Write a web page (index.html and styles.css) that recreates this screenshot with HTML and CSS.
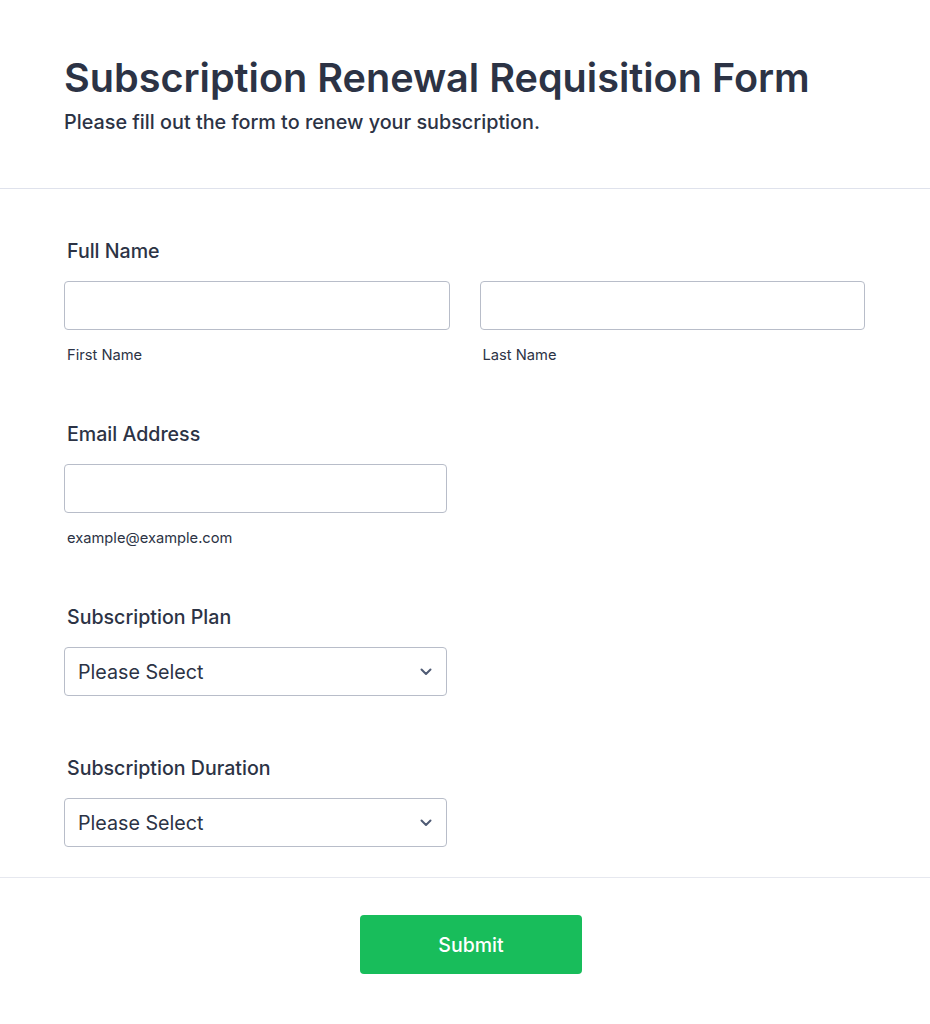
FILE: index.html
```html
<!DOCTYPE html>
<html lang="en">
<head>
  <meta charset="UTF-8">
  <meta name="viewport" content="width=device-width, initial-scale=1.0">
  <title>Subscription Renewal Requisition Form</title>
  <link rel="stylesheet" href="styles.css">
</head>
<body>
  <form class="form">
    <header class="form-header">
      <h1>Subscription Renewal Requisition Form</h1>
      <p>Please fill out the form to renew your subscription.</p>
    </header>

    <section class="form-body">
      <div class="field">
        <label class="field-label">Full Name</label>
        <div class="name-row">
          <div class="name-col">
            <input type="text" class="text-input">
            <span class="sub-label">First Name</span>
          </div>
          <div class="name-col">
            <input type="text" class="text-input">
            <span class="sub-label">Last Name</span>
          </div>
        </div>
      </div>

      <div class="field">
        <label class="field-label">Email Address</label>
        <input type="email" class="text-input narrow">
        <span class="sub-label">example@example.com</span>
      </div>

      <div class="field">
        <label class="field-label">Subscription Plan</label>
        <div class="select narrow">
          <span>Please Select</span>
          <svg width="12" height="8" viewBox="0 0 12 8"><path d="M1.5 1.5 6 6l4.5-4.5" fill="none" stroke="#4f5b74" stroke-width="2" stroke-linecap="round" stroke-linejoin="round"/></svg>
        </div>
      </div>

      <div class="field">
        <label class="field-label">Subscription Duration</label>
        <div class="select narrow">
          <span>Please Select</span>
          <svg width="12" height="8" viewBox="0 0 12 8"><path d="M1.5 1.5 6 6l4.5-4.5" fill="none" stroke="#4f5b74" stroke-width="2" stroke-linecap="round" stroke-linejoin="round"/></svg>
        </div>
      </div>
    </section>

    <footer class="form-footer">
      <button type="button" class="submit-btn">Submit</button>
    </footer>
  </form>
</body>
</html>
```

FILE: styles.css
```css
body {
  font-family: 'Inter', 'Noto Sans', sans-serif;
  background-color: #fff;
  color: #2c3345;
  margin: 0;
  padding: 0;
}
.form-header {
  padding: 54px 64px 54px;
  border-bottom: 1px solid #dfe2ec;
}
.form-header h1 {
  margin: 0;
  font-size: 39.6px;
  font-weight: 600;
  line-height: 48px;
}
.form-header p {
  margin: 8px 0 0;
  font-size: 19.8px;
  font-weight: 500;
  line-height: 24px;
}
.form-body {
  padding: 50px 64px 30px;
  border-bottom: 1px solid #e6e8ef;
}
.field {
  display: flex;
  flex-direction: column;
  align-items: flex-start;
  margin-bottom: 60px;
}
.field:last-child { margin-bottom: 0; }
.field-label {
  margin-left: 3px;
  font-size: 19.6px;
  font-weight: 500;
  line-height: 24px;
  margin-bottom: 18px;
}
.name-row {
  display: flex;
  gap: 30px;
  width: 801px;
}
.name-col {
  flex: 1;
  display: flex;
  flex-direction: column;
}
.text-input {
  box-sizing: border-box;
  width: 100%;
  height: 49px;
  margin: 0;
  border: 1px solid #b8bdc9;
  border-radius: 4px;
  background: #fff;
  font: inherit;
}
.narrow { width: 383px; }
.sub-label {
  margin: 17px 0 -2px 3px;
  font-size: 14.7px;
  line-height: 17px;
}
.select {
  box-sizing: border-box;
  height: 49px;
  display: flex;
  align-items: center;
  justify-content: space-between;
  padding: 0 14px 0 13px;
  border: 1px solid #b8bdc9;
  border-radius: 4px;
  font-size: 19.7px;
}
.form-footer {
  display: flex;
  justify-content: center;
  padding: 37px 0 50px 12px;
}
.submit-btn {
  width: 222px;
  height: 59px;
  border: none;
  border-radius: 4px;
  background: #18bd5b;
  color: #fff;
  font-family: inherit;
  font-size: 19.5px;
  font-weight: 500;
}
```
